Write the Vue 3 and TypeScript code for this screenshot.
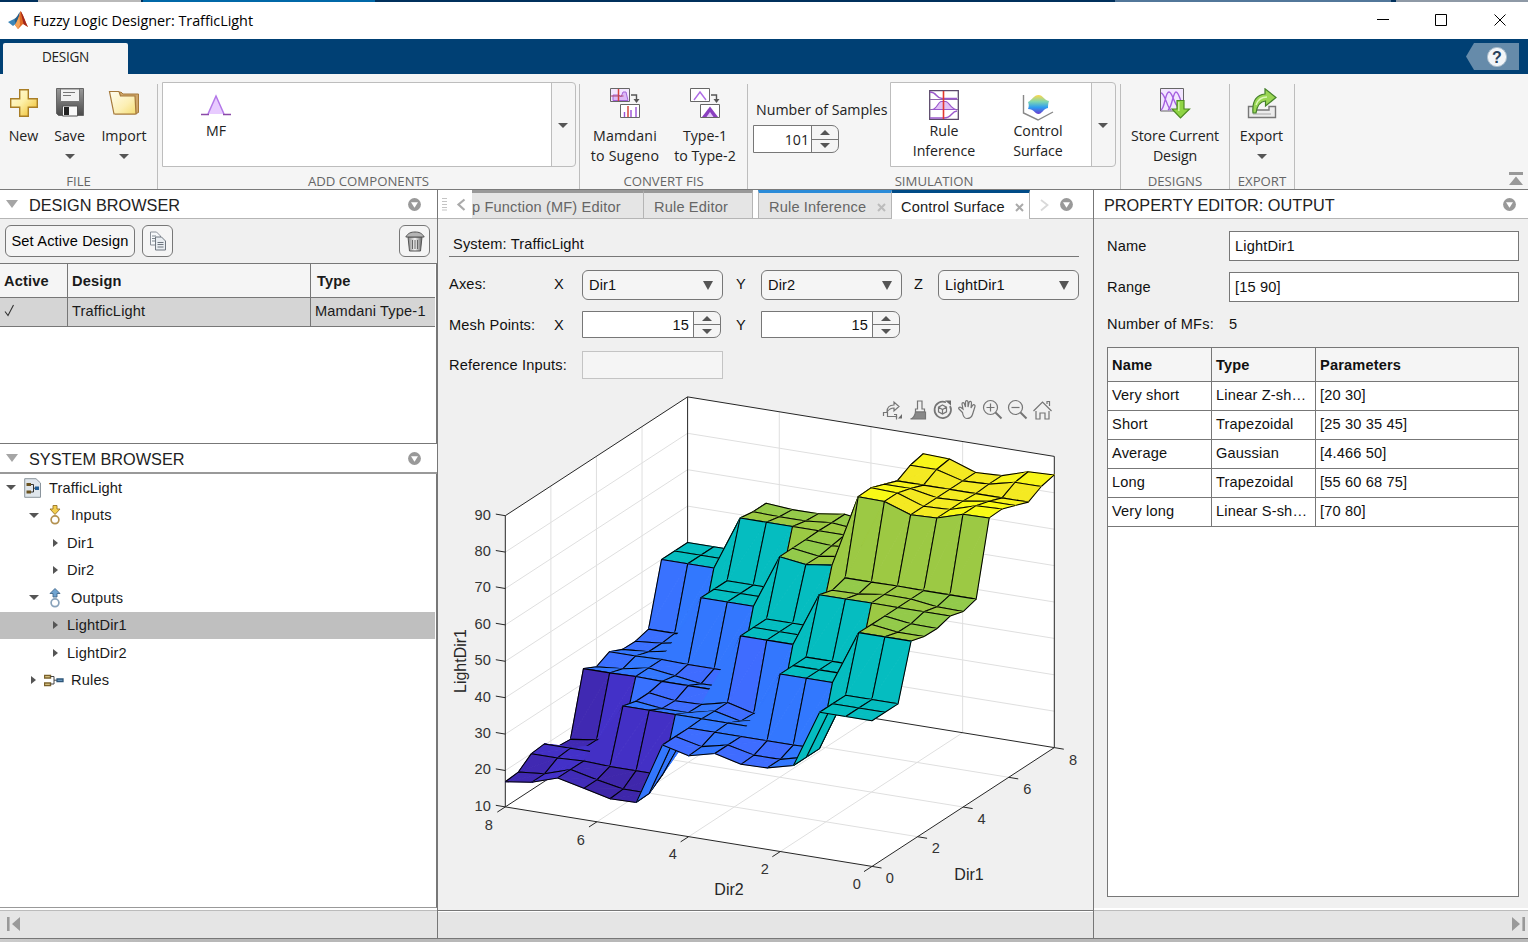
<script setup lang="ts">
interface Pt { x: number; y: number }
interface Face { fill: string; back: string; front: string; backEdges: string; frontEdges: string }

const N = 15

// Plateau height for each pair of input terms: rows follow Dir1, columns follow Dir2.
const level: number[][] = [
  [2, 1, 1, 0, 0],
  [3, 2, 1, 1, 0],
  [3, 3, 2, 1, 1],
  [4, 4, 3, 2, 1],
  [4, 4, 3, 3, 2],
]
const base = [16.9, 32.2, 50, 63.7, 84.9]
const ripple = [3.4, 2, 0, 1.2, -2.8]
const weak = [0, 0.1, 0.9, 1, 0.1, 0, 0.9, 0, 0.9, 0.05, 0, 0.5, 1, 0.3, 0]
const low = ['#3e26a8', '#3f6cff', '#05bdc0', '#92ca4b', '#f9fb15']
const high = ['#4331c8', '#3278fe', '#05bdc0', '#9dc943', '#f4e922']

const termAt = (i: number, j: number) => level[Math.floor(i / 3)][Math.floor(j / 3)]
const weakAt = (i: number, j: number) => Math.max(weak[i], weak[j])
const zAt = (i: number, j: number) => base[termAt(i, j)] + ripple[termAt(i, j)] * weakAt(i, j)

function project(d1: number, d2: number, z: number): Pt {
  return {
    x: 872 + (d1 / 8) * 182.3 - (d2 / 8) * 366.7,
    y: 866.4 - (d1 / 8) * 118.8 - (d2 / 8) * 59.5 - (z - 10) * 3.64,
  }
}

function mix(a: string, b: string, t: number): string {
  const ch = (s: string, k: number) => parseInt(s.slice(1 + k * 2, 3 + k * 2), 16)
  const v = [0, 1, 2].map((k) => Math.round(ch(a, k) + (ch(b, k) - ch(a, k)) * t))
  return `rgb(${v.join(',')})`
}

const str = (p: Pt) => `${p.x.toFixed(2)} ${p.y.toFixed(2)}`
const vertex = (i: number, j: number) => str(project((i * 8) / (N - 1), (j * 8) / (N - 1), zAt(i, j)))

const faces: Face[] = []
for (let i = N - 2; i >= 0; i--) {
  for (let j = N - 2; j >= 0; j--) {
    const a = vertex(i, j)
    const b = vertex(i, j + 1)
    const c = vertex(i + 1, j + 1)
    const d = vertex(i + 1, j)
    const t = termAt(i, j)
    faces.push({
      fill: mix(low[t], high[t], weakAt(i, j)),
      back: `M${b}L${c}L${d}Z`,
      front: `M${a}L${b}L${d}Z`,
      backEdges: `M${b}L${c}L${d}`,
      frontEdges: `M${b}L${a}L${d}`,
    })
  }
}

const seg = (p: Pt, q: Pt) => `M${str(p)}L${str(q)}`
let grid = ''
for (let z = 20; z <= 80; z += 10) {
  grid += seg(project(0, 8, z), project(8, 8, z)) + seg(project(8, 8, z), project(8, 0, z))
}
for (const v of [2, 4, 6]) {
  grid += seg(project(v, 8, 10), project(v, 8, 90)) + seg(project(v, 8, 10), project(v, 0, 10))
  grid += seg(project(8, v, 10), project(8, v, 90)) + seg(project(8, v, 10), project(0, v, 10))
}

const corner = (d1: number, d2: number, z: number) => str(project(d1, d2, z))
const walls = `M${corner(0, 8, 10)}L${corner(0, 8, 90)}L${corner(8, 8, 90)}L${corner(8, 0, 90)}L${corner(8, 0, 10)}L${corner(0, 0, 10)}Z`
let frame = walls
frame += `M${corner(0, 8, 10)}L${corner(8, 8, 10)}L${corner(8, 0, 10)}M${corner(8, 8, 10)}L${corner(8, 8, 90)}`

const zTicks = [10, 20, 30, 40, 50, 60, 70, 80, 90].map((z) => ({ z, p: project(0, 8, z) }))
const dTicks = [0, 2, 4, 6, 8]
for (const { p } of zTicks) frame += seg(p, { x: p.x - 9.5, y: p.y - 1.6 })
for (const v of dTicks) {
  const p = project(0, v, 10)
  frame += seg(p, { x: p.x - 8, y: p.y + 5.2 })
  const q = project(v, 0, 10)
  frame += seg(q, { x: q.x + 9.5, y: q.y + 1.6 })
}

const mfs = [
  ['Very short', 'Linear Z-sh…', '[20 30]'],
  ['Short', 'Trapezoidal', '[25 30 35 45]'],
  ['Average', 'Gaussian', '[4.466 50]'],
  ['Long', 'Trapezoidal', '[55 60 68 75]'],
  ['Very long', 'Linear S-sh…', '[70 80]'],
]

interface Node { label: string; cls: string; open: boolean; icon: string; sel?: boolean }
const tree: Node[] = [
  { label: 'TrafficLight', cls: 'l0', open: true, icon: 'doc' },
  { label: 'Inputs', cls: 'l1', open: true, icon: 'in' },
  { label: 'Dir1', cls: 'l2', open: false, icon: '' },
  { label: 'Dir2', cls: 'l2', open: false, icon: '' },
  { label: 'Outputs', cls: 'l1', open: true, icon: 'out' },
  { label: 'LightDir1', cls: 'l2', open: false, icon: '', sel: true },
  { label: 'LightDir2', cls: 'l2', open: false, icon: '' },
  { label: 'Rules', cls: 'l1', open: false, icon: 'rules' },
]
</script>

<template>
  <div class="win">
    <div class="behind"><i class="b1"></i><i class="b2"></i><i class="b3"></i><i class="b4"></i><i class="b5"></i></div>
    <header class="title">
      <svg class="logo" width="20" height="19" viewBox="0 0 20 19">
        <path d="M0 11 6 8 9 12 5 15Z" fill="#3c86b8" /><path d="M6 8C9 7 10 3 12 1L10 11 8 13Z" fill="#245f8c" />
        <path d="M12.500 0C15 3 17 10 20 16L15 13 10 18 7 14C9 12 11 5 12.500 0Z" fill="#e06a25" />
        <path d="M12.500 0C15 3 17 10 20 16L15.500 13Z" fill="#a3261a" /><path d="M11.500 5 12 14 10 18 7 14Z" fill="#f3a45a" />
      </svg>
      <span class="t">Fuzzy Logic Designer: TrafficLight</span>
      <svg class="ctl" width="140" height="20" viewBox="0 0 140 20" fill="none" stroke="#000" stroke-width="1">
        <path d="M7 9.500h12M65.500 4.500h11v11h-11ZM124.500 4.500l11 11M135.500 4.500l-11 11" />
      </svg>
    </header>
    <nav class="bar">
      <div class="dtab">DESIGN</div>
      <svg class="help" width="53" height="27" viewBox="0 0 53 27">
        <path d="M8 0H53V27H8L0 13.500Z" fill="#668baa" /><circle cx="31" cy="14" r="9.600" fill="#f2f5f8" stroke="#a9bccb" />
        <text x="31" y="19.500" text-anchor="middle" font-family="Liberation Sans" font-weight="700" font-size="16" fill="#27405a">?</text>
      </svg>
    </nav>

    <section class="ribbon">
      <div class="sec">
        <div class="body">
          <div class="btn w1">
            <svg width="30" height="32" viewBox="0 0 30 32"><defs><linearGradient id="gold" x1="0" y1="0" x2="1" y2="1"><stop offset="0" stop-color="#fffbe0" /><stop offset=".45" stop-color="#fdf0a8" /><stop offset="1" stop-color="#eeb71b" /></linearGradient></defs><path d="M10.700 1.700h8.600v9h9v8.600h-9v9h-8.600v-9h-9v-8.600h9Z" fill="url(#gold)" stroke="#a97e26" stroke-width="1.400" /></svg>
            <span>New</span>
          </div>
          <div class="btn w2">
            <svg width="30" height="32" viewBox="0 0 30 32"><defs><linearGradient id="disk" x1="0" y1="0" x2="0" y2="1"><stop offset="0" stop-color="#9a9a9a" /><stop offset="1" stop-color="#4a4a4a" /></linearGradient></defs><path d="M1.500 .5h27v27h-25l-2-2Z" fill="url(#disk)" stroke="#666" /><path d="M5.500 1h19v12.500h-19Z" fill="#f2f2f2" stroke="#777" /><path d="M8 4.500h12M8 7.500h8" stroke="#777" /><path d="M7.500 18h15v10h-15Z" fill="#fafafa" stroke="#555" /><path d="M9 19h5v8H9Z" fill="#222" /></svg>
            <span>Save</span><i class="dn"></i>
          </div>
          <div class="btn w3">
            <svg width="34" height="32" viewBox="0 0 34 32"><defs><linearGradient id="fold" x1="0" y1="0" x2="1" y2="1"><stop offset="0" stop-color="#fffdf0" /><stop offset=".6" stop-color="#fcefb4" /><stop offset="1" stop-color="#f4dc72" /></linearGradient></defs><path d="M6 7 14 4 16 6H31.500V24.500L28 26H8Z" fill="#cfa66a" stroke="#a5793a" /><path d="M2.500 3.500H12L13.500 8H28L29 26H7Z" fill="url(#fold)" stroke="#a5793a" stroke-width="1.200" /></svg>
            <span>Import</span><i class="dn"></i>
          </div>
        </div>
        <div class="cap">FILE</div>
      </div>

      <div class="sec">
        <div class="body">
          <div class="gal g1">
            <div class="gmain">
              <div class="item i1">
                <svg width="30" height="32" viewBox="0 0 30 32"><path d="M7 25 15 7 23 25Z" fill="#e8cbff" /><path d="M7 25 15 7 23 25" fill="none" stroke="#b377e8" stroke-width="1.500" /><path d="M0 25.500H8M22 25.500H30" stroke="#8b4aa8" stroke-width="1.300" /></svg>
                <span>MF</span>
              </div>
            </div>
            <div class="garr"><i class="dn"></i></div>
          </div>
        </div>
        <div class="cap">ADD COMPONENTS</div>
      </div>

      <div class="sec">
        <div class="body">
          <div class="btn w4">
            <svg width="32" height="32" viewBox="0 0 32 32" fill="none"><path d="M1.500 .5h19v13h-19Z" fill="#f3e8ff" stroke="#666" /><path d="M4 12.500V7h6l2 2 2-5h3l2 8.500Z" fill="#dcb8f7" stroke="#a463d8" /><path d="M9.500 1v12" stroke="#d6453a" stroke-width="1.500" /><path d="M1.500 8h13" stroke="#b04a6a" /><path d="M22 7h5.500v6" stroke="#555" stroke-width="1.400" /><path d="M24.500 11h6L27.500 15Z" fill="#555" /><path d="M11.500 16.500h19v13h-19Z" fill="#fff" stroke="#666" /><path d="M15.500 24v5M22 22v7M27 19v10" stroke="#9b51d6" stroke-width="1.400" /><path d="M19 18v11" stroke="#d6453a" stroke-width="1.500" /></svg>
            <span>Mamdani<br />to Sugeno</span>
          </div>
          <div class="btn w5">
            <svg width="32" height="32" viewBox="0 0 32 32" fill="none"><path d="M1.500 .5h19v13h-19Z" fill="#fff" stroke="#666" /><path d="M5 12 11 4 17 12" stroke="#ae6be6" stroke-width="1.400" /><path d="M22 7h5.500v6" stroke="#555" stroke-width="1.400" /><path d="M24.500 11h6L27.500 15Z" fill="#555" /><path d="M11.500 16.500h19v13h-19Z" fill="#fff" stroke="#666" /><path d="M13 29 21 18.500 29 29Z" fill="#8a3fc0" /><path d="M17.500 29 21 24 24.500 29Z" fill="#e4ccf8" /></svg>
            <span>Type-1<br />to Type-2</span>
          </div>
        </div>
        <div class="cap">CONVERT FIS</div>
      </div>

      <div class="sec">
        <div class="body">
          <div class="samples">
            <div class="slabel">Number of Samples</div>
            <div class="spin sp1"><div class="val">101</div><div class="steps"><b><i class="up"></i></b><b><i class="dn"></i></b></div></div>
          </div>
          <div class="gal g2">
            <div class="gmain">
              <div class="item i2">
                <svg width="32" height="32" viewBox="0 0 32 32" fill="none"><path d="M1.700 1.700h28.600v28.600h-28.600Z" fill="#fff" stroke="#5b4a6b" stroke-width="1.300" /><path d="M2 10.500h28M2 20.500h28" stroke="#8f68ab" stroke-width="1.200" /><path d="M4 20.500C9 20 10 13 13 12.500h5C21 13 23 20 28 20.500Z" fill="#e1c2f7" stroke="#9a58cc" stroke-width="1.200" /><path d="M2 3c7 0 6 6.500 12 6.500H29M2 29H16c8 0 7-6.500 13-7" stroke="#9a58cc" stroke-width="1.400" /><path d="M15.500 2v28" stroke="#e3382e" stroke-width="1.600" /></svg>
                <span>Rule<br />Inference</span>
              </div>
              <div class="item i3">
                <svg width="32" height="32" viewBox="0 0 32 32" fill="none"><defs><linearGradient id="surf" x1="0" y1="0" x2="0" y2="1"><stop offset="0" stop-color="#ffd84a" /><stop offset=".35" stop-color="#7ed6b0" /><stop offset=".65" stop-color="#2f9df0" /><stop offset="1" stop-color="#6a3bd0" /></linearGradient></defs><path d="M1.500 6V24L16 31 31 23" stroke="#888" stroke-width="1.400" /><path d="M6 13C10 11 12 6 16.500 6S22 11 27 12C26 15 26 17 26 19C21 20 20 25 16.500 25S12 20 6 20C7 18 7 15 6 13Z" fill="url(#surf)" /></svg>
                <span>Control<br />Surface</span>
              </div>
            </div>
            <div class="garr"><i class="dn"></i></div>
          </div>
        </div>
        <div class="cap">SIMULATION</div>
      </div>

      <div class="sec">
        <div class="body">
          <div class="btn w6">
            <svg width="32" height="32" viewBox="0 0 32 32" fill="none"><path d="M1.500 .5h23v22.500h-23Z" fill="#f2e6ff" stroke="#666" /><path d="M2 22C6 20 6 4 10 4S15 20 23 22M2 5C6 5 8 20 12 22M9 22C13 20 14 4 17 4S22 14 24 20" stroke="#a45fe0" stroke-width="1.400" /><path d="M18 12.500h7v8.500h5.500L21.500 30 13 21h5Z" fill="#8fd444" stroke="#4d8a22" stroke-width="1.200" /><path d="M19.800 14v9" stroke="#d2f5a6" stroke-width="1.500" /></svg>
            <span>Store Current<br />Design</span>
          </div>
        </div>
        <div class="cap">DESIGNS</div>
      </div>

      <div class="sec">
        <div class="body">
          <div class="btn w7">
            <svg width="32" height="32" viewBox="0 0 32 32" fill="none"><path d="M2.500 18.500H8V22H23V18.500H29.500V29.500H2.500Z" fill="#ececec" stroke="#777" stroke-width="1.400" /><path d="M7 26H25" stroke="#c9c9c9" stroke-width="2" /><path d="M7 25C6 14 10 7 19 6V.800L30 9.500 19.500 18V13C14 13.500 11 18 10 25Z" fill="#9ad654" stroke="#44802a" stroke-width="1.200" /><path d="M10 17c2-6 6-8 11-8" stroke="#dcf8b8" stroke-width="1.300" /></svg>
            <span>Export</span><i class="dn"></i>
          </div>
        </div>
        <div class="cap">EXPORT</div>
      </div>
      <svg class="collapse" width="14" height="14" viewBox="0 0 14 14"><path d="M0 0H14V3H0ZM7 4.500 14 13H0Z" fill="#999" /></svg>
    </section>

    <main class="cols">
      <aside class="left">
        <div class="phead"><i class="tri"></i><span class="ptitle">DESIGN BROWSER</span>
          <svg class="circ" width="13" height="13" viewBox="0 0 13 13"><circle cx="6.500" cy="6.500" r="6.400" fill="#999" /><path d="M3 4.300h7L6.500 9.800Z" fill="#fff" /></svg></div>
        <div class="tools">
          <button class="tb set">Set Active Design</button>
          <button class="tb sq"><svg width="18" height="20" viewBox="0 0 18 20"><path d="M1.500 1h6l4 4v9h-10Z" fill="#f6f8fa" stroke="#8a9099" /><path d="M3 5h4M3 7.500h3M3 10h3" stroke="#7f8890" /><path d="M6.500 6h6l4 4v9h-10Z" fill="#e9edf1" stroke="#6f7780" /><path d="M8.500 11.500h6M8.500 13.500h6M8.500 16h6" stroke="#6f7780" /></svg></button>
          <button class="tb sq last"><svg width="20" height="21" viewBox="0 0 20 21"><defs><linearGradient id="bin"><stop offset="0" stop-color="#888" /><stop offset=".5" stop-color="#f5f5f5" /><stop offset="1" stop-color="#666" /></linearGradient></defs><path d="M3 6H17L15.500 20H4.500Z" fill="url(#bin)" stroke="#555" /><path d="M7.500 9v9M10 9v9M12.500 9v9" stroke="#666" /><path d="M.8 6C3 2 6 1 10 1S17 2 19.200 6Z" fill="#b5b5b5" stroke="#555" /></svg></button>
        </div>
        <div class="dtable">
          <div class="dr dh"><div>Active</div><div>Design</div><div>Type</div></div>
          <div class="dr dd"><div><svg width="11" height="13" viewBox="0 0 11 13"><path d="M1 7.500 4 11.500 9.500 1" fill="none" stroke="#333" stroke-width="1.100" /></svg></div><div>TrafficLight</div><div>Mamdani Type-1</div></div>
        </div>
        <div class="phead ph2"><i class="tri"></i><span class="ptitle">SYSTEM BROWSER</span>
          <svg class="circ" width="13" height="13" viewBox="0 0 13 13"><circle cx="6.500" cy="6.500" r="6.400" fill="#999" /><path d="M3 4.300h7L6.500 9.800Z" fill="#fff" /></svg></div>
        <div class="tree">
          <div v-for="n in tree" :key="n.label" class="node" :class="[n.cls, { sel: n.sel }]">
            <i class="tw" :class="n.open ? 'dn' : 'rt'"></i>
            <svg v-if="n.icon === 'doc'" class="ic doc" width="18" height="20" viewBox="0 0 18 20"><path d="M.7.700H12L16.500 5V19.300H.7Z" fill="#dfe6ec" stroke="#8a949c" /><path d="M2.500 5h4.500v3h-4.500ZM2.500 12.500h4.500v3h-4.500Z" fill="#6b5320" /><path d="M7 6.500h2.500v7.500H7M9.500 10.200h2" stroke="#333" fill="none" /><path d="M11 8.500h4v3.500h-4Z" fill="#1f5c94" /></svg>
            <svg v-if="n.icon === 'in'" class="ic io" width="12" height="20" viewBox="0 0 12 20"><path d="M4 .5h4V4h3L6 9.500 1 4h3Z" fill="#f3ce4f" stroke="#9a7427" stroke-width=".9" /><circle cx="6" cy="14.800" r="3.900" fill="#fff" stroke="#b39150" stroke-width="1.700" /></svg>
            <svg v-if="n.icon === 'out'" class="ic io" width="12" height="20" viewBox="0 0 12 20"><path d="M4 9V5.500H1L6 .5l5 5H8V9Z" fill="#6fa3d0" stroke="#41668a" stroke-width=".9" /><circle cx="6" cy="14.800" r="3.900" fill="#fff" stroke="#8aa3bb" stroke-width="1.700" /></svg>
            <svg v-if="n.icon === 'rules'" class="ic ru" width="20" height="13" viewBox="0 0 20 13"><path d="M.5 1.500h6v2.500h-6ZM.5 9h6v2.500h-6Z" fill="#f0dc9a" stroke="#7a612b" stroke-width="1.400" /><path d="M6.500 2.500h3.500v7.500H6.500M10 6.200h3" stroke="#444" fill="none" /><path d="M13 5h6v2.500h-6Z" fill="#79aad2" stroke="#2d5578" stroke-width="1.300" /></svg>
            <span>{{ n.label }}</span>
          </div>
        </div>
        <div class="foot"><svg width="14" height="14" viewBox="0 0 14 14"><path d="M0 0h2.600v14H0ZM13 0V14L5 7Z" fill="#999" /></svg></div>
      </aside>

      <section class="mid">
        <div class="tabs">
          <div class="pre"><svg width="30" height="16" viewBox="0 0 30 16"><path d="M0 1.500h5M0 4.500h5M0 7.500h5M0 10.500h5M0 13h5" stroke="#c4c4c4" /><path d="M22.500 2.500 16.500 7.500l6 5.500" fill="none" stroke="#aaa" stroke-width="2.200" /></svg></div>
          <div class="tab ta"><span>p Function (MF) Editor</span></div>
          <div class="tab tbb"><span>Rule Editor</span></div>
          <div class="tab tc"><span>Rule Inference</span><svg width="9" height="9" viewBox="0 0 9 9"><path d="M1 1l7 7M8 1l-7 7" stroke="#bbb" stroke-width="2" /></svg></div>
          <div class="tab td"><span>Control Surface</span><svg width="9" height="9" viewBox="0 0 9 9"><path d="M1 1l7 7M8 1l-7 7" stroke="#aaa" stroke-width="2" /></svg></div>
          <div class="post"><svg width="36" height="14" viewBox="0 0 36 14"><path d="M1 2 7.500 7 1 12.500" fill="none" stroke="#d9d9d9" stroke-width="1.800" /><circle cx="26.500" cy="6.500" r="6.400" fill="#999" /><path d="M23 4.300h7l-3.500 5.500Z" fill="#fff" /></svg></div>
        </div>
        <div class="form">
          <div class="sys">System: TrafficLight</div>
          <div class="frow">
            <span>Axes:</span><span>X</span><div class="sel1">Dir1<i class="dd2"></i></div><span class="c">Y</span><div class="sel1">Dir2<i class="dd2"></i></div><span class="c z">Z</span><div class="sel1">LightDir1<i class="dd2"></i></div>
          </div>
          <div class="frow r2">
            <span>Mesh Points:</span><span>X</span>
            <div class="spin"><div class="val">15</div><div class="steps"><b><i class="up"></i></b><b><i class="dn"></i></b></div></div>
            <span class="c">Y</span>
            <div class="spin"><div class="val">15</div><div class="steps"><b><i class="up"></i></b><b><i class="dn"></i></b></div></div>
          </div>
          <div class="frow r3"><span class="wide">Reference Inputs:</span><div class="ref"></div></div>
        </div>
        <svg class="chart" width="655" height="525" viewBox="438 385 655 525">
          <path :d="walls" fill="#fff" />
          <path :d="grid" fill="none" stroke="#dfdfdf" stroke-width="1" />
          <path :d="frame" fill="none" stroke="#262626" stroke-width="1" />
          <g stroke-linejoin="round">
            <template v-for="(f, k) in faces" :key="k">
              <path :d="f.back" :fill="f.fill" :stroke="f.fill" stroke-width="1" />
              <path :d="f.backEdges" fill="none" stroke="#000" stroke-width="1.050" />
              <path :d="f.front" :fill="f.fill" :stroke="f.fill" stroke-width=".7" />
              <path :d="f.frontEdges" fill="none" stroke="#000" stroke-width="1.050" />
            </template>
          </g>
          <g class="tick">
            <text v-for="t in zTicks" :key="'z' + t.z" x="491" :y="t.p.y + 3.900" text-anchor="end">{{ t.z }}</text>
            <text v-for="v in dTicks" :key="'a' + v" :x="857 - v * 46" :y="889 - v * 7.400" text-anchor="middle">{{ v }}</text>
            <text v-for="v in dTicks" :key="'b' + v" :x="890 + v * 22.900" :y="883 - v * 14.800" text-anchor="middle">{{ v }}</text>
          </g>
          <g class="axis">
            <text x="729" y="894.500" text-anchor="middle">Dir2</text>
            <text x="969" y="879.500" text-anchor="middle">Dir1</text>
            <text transform="translate(466 661) rotate(-90)" text-anchor="middle">LightDir1</text>
          </g>
          <g fill="none" stroke="#757575" stroke-width="1.200">
            <path d="M883.500 416v-3.500h4v4h9v3M887 412c0-5 3-7 7-7v-3l5 4.500-5 4.500v-3c-3 0-5 1-7 4" />
            <path d="M894 414.500h2.500v3.500" /><path d="M902 414v4.500h-4Z" fill="#6b6b6b" stroke="none" />
            <path d="M917.500 401h4.500v8h2.500v3h-9v-3h2Z" /><path d="M915.500 412h10v7h-15c3-1 4.500-4 5-7Z" fill="#888" />
            <path d="M946 402.300A8.200 8.200 0 1 0 950 406" stroke-width="1.700" /><path d="M945 400.500h6v5Z" fill="#6b6b6b" stroke="none" /><path d="M942.500 405l4 2.200v4.600l-4 2.200-4-2.200v-4.600ZM938.500 407.200l4 2.300 4-2.300M942.500 409.500v4.500" />
            <path d="M962.500 412.500l-3.500-3.500c-1-1 .5-2.500 2-1.500l2 1.500-1-5c0-1.500 2-2 2.500 0l1 3v-5c0-1.800 2.400-1.800 2.500 0v5l1-4.500c.5-1.800 2.500-1.300 2.500.5l-.5 5 1.500-2.500c1-1.500 3-.5 2.500 1l-2.500 8c-1 3-3 4-5.500 4s-4-2.500-4.500-6Z" />
            <circle cx="990.500" cy="407.500" r="7" /><path d="M986.500 407.500h8M990.500 403.500v8" /><path d="M995.500 412.500l6 6" stroke-width="2" />
            <circle cx="1015.500" cy="407.500" r="7" /><path d="M1011.500 407.500h8" /><path d="M1020.500 412.500l6 6" stroke-width="2" />
            <path d="M1033.500 411 1042.500 402l9 9M1036 411v8h4v-6h5v6h4v-8M1047 404v-2.500h2.500V406" />
          </g>
        </svg>
        <div class="foot mfoot"></div>
      </section>

      <aside class="right">
        <div class="phead rh"><span class="ptitle">PROPERTY EDITOR: OUTPUT</span>
          <svg class="circ" width="13" height="13" viewBox="0 0 13 13"><circle cx="6.500" cy="6.500" r="6.400" fill="#999" /><path d="M3 4.300h7L6.500 9.800Z" fill="#fff" /></svg></div>
        <div class="props">
          <div class="pr"><span>Name</span><div class="inp">LightDir1</div></div>
          <div class="pr p2"><span>Range</span><div class="inp">[15 90]</div></div>
          <div class="pr p3"><span>Number of MFs:</span><em>5</em></div>
          <div class="mft">
            <div class="mr mh"><div>Name</div><div>Type</div><div>Parameters</div></div>
            <div v-for="m in mfs" :key="m[0]" class="mr"><div v-for="c in m" :key="c">{{ c }}</div></div>
          </div>
        </div>
        <div class="foot rfoot"><svg width="14" height="14" viewBox="0 0 14 14"><path d="M0 0V14L8 7ZM10.400 0H13v14h-2.600Z" fill="#999" /></svg></div>
      </aside>
    </main>
    <div class="under"></div>
  </div>
</template>

<style>
html, body { margin: 0; overflow: hidden; }
</style>

<style scoped>
.win { width: 1528px; height: 942px; display: flex; flex-direction: column; background: #f0f0f0; font-family: "Liberation Sans", Arial, sans-serif; font-size: 14.6px; letter-spacing: 0.16px; color: #1a1a1a; overflow: hidden; }
.win * { box-sizing: border-box; }
.behind { height: 2px; display: flex; background: #00305c; flex: none; }
.b1 { width: 38px; } .b2 { width: 103px; background: #b9b9b9; } .b3 { width: 232px; background: #0068a8; margin-left: 2px; }
.b4 { width: 276px; background: #52779a; margin-left: 740px; } .b5 { flex: 1; background: #8e99a6; margin-left: 5px; }
.title { height: 37px; flex: none; background: #fff; display: flex; align-items: center; padding-left: 8px; font-family: "Open Sans", "Noto Sans", sans-serif; font-size: 14.4px; color: #000; }
.logo { margin-top: -1px; }
.t { margin-left: 5px; letter-spacing: -0.03px; white-space: nowrap; }
.ctl { margin-left: auto; margin-right: 18px; margin-top: -1px; }
.bar { height: 35px; flex: none; background: #004074; display: flex; align-items: flex-start; justify-content: space-between; padding: 4px 9px 0 3px; font-family: "Open Sans", "Noto Sans", sans-serif; }
.dtab { width: 125px; height: 31px; background: #f5f5f5; border-radius: 2px 2px 0 0; text-align: center; line-height: 28px; font-size: 13.6px; letter-spacing: -0.3px; color: #222; }
.ribbon { height: 116px; flex: none; background: #f5f5f5; border-bottom: 1px solid #7a7a7a; display: grid; grid-template-columns: 158px 422px 168px 373px 109px 65px 1fr; font-family: "Open Sans", "Noto Sans", sans-serif; font-size: 14.2px; letter-spacing: 0; color: #222; }
.sec { position: relative; display: flex; flex-direction: column; }
.sec::after { content: ""; position: absolute; right: 0; top: 10px; bottom: 0; width: 1px; background: #bdbdbd; }
.body { height: 99px; display: flex; }
.cap { text-align: center; line-height: 16px; font-size: 13.2px; letter-spacing: 0; color: #666; padding-right: 1px; }
.btn { display: flex; flex-direction: column; align-items: center; padding-top: 14px; text-align: center; white-space: nowrap; line-height: 20px; }
.btn svg { margin-bottom: 6px; flex: none; }
.dn, .up, .rt { display: block; width: 0; height: 0; border: 5px solid transparent; border-bottom: 0; border-top-color: #555; }
.up { border: 5px solid transparent; border-top: 0; border-bottom-color: #555; }
.btn .dn { margin-top: 8px; }
.w1 { width: 43px; margin-left: 2px; } .w2 { width: 47px; margin-left: 1px; } .w3 { width: 62px; }
.w4 { width: 80px; margin-left: 5px; letter-spacing: 0.2px; } .w5 { width: 80px; } .w6 { width: 108px; letter-spacing: -0.15px; } .w7 { width: 63px; }
.gal { height: 85px; margin-top: 8px; border: 1px solid #bdbdbd; border-radius: 0 4px 4px 0; display: flex; }
.g1 { width: 414px; margin-left: 4px; } .g2 { width: 226px; margin-left: 3px; }
.gmain { flex: 1; background: #fff; display: flex; }
.garr { width: 24px; border-left: 1px solid #bdbdbd; display: flex; align-items: center; justify-content: center; padding: 2px 1px 0 0; }
.item { display: flex; flex-direction: column; align-items: center; text-align: center; line-height: 20px; padding-top: 6px; }
.item svg { flex: none; }
.i1 { width: 106px; } .i2 { width: 94px; margin-left: 6px; } .i3 { width: 94px; }
.samples { width: 139px; padding: 26px 0 0 5px; }
.slabel { line-height: 20px; margin-left: 3px; white-space: nowrap; }
.spin { display: flex; border: 1px solid #777; border-radius: 0 7px 7px 0; background: #f5f5f5; overflow: hidden; }
.sp1 { width: 86px; height: 28px; margin-top: 5px; }
.val { flex: 1; background: #fff; border-right: 1px solid #777; text-align: right; line-height: 28px; padding-right: 2px; }
.steps { width: 26px; display: flex; flex-direction: column; }
.steps b { flex: 1; display: flex; align-items: center; justify-content: center; }
.steps b + b { border-top: 1px solid #777; }
.collapse { justify-self: end; align-self: end; margin: 0 5px 3px 0; }
.cols { height: 749px; flex: none; display: grid; grid-template-columns: 438px 656px 434px; }
.left { border-right: 1px solid #777; display: flex; flex-direction: column; background: #fff; }
.phead { height: 29px; flex: none; background: #fff; border-bottom: 1px solid #b5b5b5; display: flex; align-items: center; padding: 0 16px 0 6px; }
.tri { width: 0; height: 0; border: 6px solid transparent; border-top: 8px solid #a5a5a5; border-bottom: 0; }
.ptitle { font-size: 16.3px; letter-spacing: 0; margin-left: 11px; color: #222; line-height: 20px; margin-top: 2px; white-space: nowrap; }
.circ { margin-left: auto; }
.tools { height: 44px; flex: none; background: #f0f0f0; display: flex; align-items: center; padding: 0 7px 0 5px; gap: 7px; }
.tb { height: 32px; margin: 0; padding: 0; border: 1px solid #777; border-radius: 6px; background: #f5f5f5; font: inherit; letter-spacing: inherit; color: #000; display: flex; align-items: center; justify-content: center; white-space: nowrap; }
.set { width: 130px; } .sq { width: 31px; } .last { margin-left: auto; }
.dtable { height: 181px; flex: none; border-top: 1px solid #777; border-bottom: 1px solid #777; border-right: 1px solid #777; }
.dr { display: grid; grid-template-columns: 67px 243px 125px; width: 435px; border-bottom: 1px solid #777; }
.dr > div { padding-left: 4px; white-space: nowrap; overflow: hidden; }
.dr > div + div { border-left: 1px solid #777; }
.dh { height: 34px; line-height: 34px; background: #f5f5f5; font-weight: 700; }
.dh > div:last-child { padding-left: 6px; }
.dd { height: 29px; line-height: 27px; background: #d5d5d5; }
.dd svg { vertical-align: -1px; }
.ph2 { height: 30px; border-bottom: 2px solid #999; }
.tree { flex: 1; border-right: 1px solid #777; border-bottom: 1px solid #999; }
.node { height: 27.5px; display: flex; align-items: center; width: 435px; white-space: nowrap; }
.sel { background: #bfbfbf; }
.tw { flex: none; }
.rt { border: 4.500px solid transparent; border-right: 0; border-left: 5.500px solid #555; }
.l0 { padding-left: 6px; } .l1 { padding-left: 29px; } .l2 { padding-left: 53px; }
.l0 .doc { margin-left: 8px; margin-right: 7px; }
.l1 .io { margin-left: 10px; margin-right: 10px; }
.l1 .rt { margin-left: 2px; }
.l1 .ru { margin-left: 8px; margin-right: 7px; }
.l2 span { margin-left: 9px; }
.foot { height: 31px; flex: none; border-top: 2px solid #fff; background: #e5e5e5; box-shadow: inset 0 1px 0 #bbb; border-bottom: 1px solid #777; padding: 7px 0 0 7px; }
.mid { border-right: 1px solid #777; display: flex; flex-direction: column; }
.tabs { height: 29px; flex: none; background: #fff; border-bottom: 1px solid #b5b5b5; display: flex; }
.pre { width: 34px; padding: 7px 0 0 4px; }
.tab { height: 28px; background: #e5e5e5; border-top: 3px solid #999; border-right: 1px solid #b5b5b5; color: #666; display: flex; align-items: center; white-space: nowrap; line-height: 20px; padding-top: 3px; }
.tab svg { margin-left: auto; margin-right: 5px; }
.ta { width: 172px; overflow: hidden; } .tbb { width: 109px; padding-left: 10px; }
.tc { width: 134px; margin-left: 5px; border-top-color: #2a8bd8; border-left: 1px solid #b5b5b5; padding-left: 10px; }
.td { width: 138px; height: 29px; background: #fff; border-top-color: #004b87; color: #1a1a1a; padding-left: 9px; padding-bottom: 1px; }
.post { padding: 8px 0 0 10px; }
.form { height: 166px; flex: none; padding: 14px 14px 0 11px; color: #111; }
.sys { height: 24px; line-height: 23px; padding-left: 4px; border-bottom: 1px solid #777; }
.frow { display: grid; grid-template-columns: 105px 28px 141px 38px 141px 36px 141px; height: 28px; margin-top: 13px; line-height: 28px; align-items: stretch; white-space: nowrap; }
.r3 { margin-top: 12px; }
.c { padding-left: 13px; }
.z { padding-left: 12px; }
.sel1 { border: 1px solid #777; border-radius: 6px; background: #f5f5f5; padding: 0 9px 0 6px; line-height: 28px; display: flex; align-items: center; justify-content: space-between; }
.dd2 { width: 0; height: 0; border: 5px solid transparent; border-top: 9px solid #555; border-bottom: 0; }
.frow .spin { width: 139px; height: 27px; }
.frow .val { line-height: 26px; padding-right: 4px; }
.wide { grid-column: span 2; }
.ref { border: 1px solid #c4c4c4; background: #f5f5f5; }
.chart { display: block; flex: none; }
.tick text { font-family: "Liberation Sans", Arial, sans-serif; font-size: 14.6px; fill: #333; }
.axis text { font-family: "Liberation Sans", Arial, sans-serif; font-size: 16px; letter-spacing: 0; fill: #262626; }
.mfoot { height: 29px; border-top: 1px solid #777; box-shadow: inset 0 1px 0 #fff; }
.right { display: flex; flex-direction: column; }
.right .phead { padding: 0 12px 0 10px; }
.right .ptitle { margin-left: 0; }
.props { flex: 1; padding: 12px 9px 0 13px; color: #111; display: flex; flex-direction: column; }
.pr { display: grid; grid-template-columns: 122px 290px; height: 29px; line-height: 30px; }
.p2 { margin-top: 12px; } .p3 { height: 20px; line-height: 20px; margin-top: 13px; }
.pr em { font-style: normal; }
.inp { border: 1px solid #777; background: #fff; padding-left: 5px; line-height: 28px; }
.mft { height: 550px; margin-top: 13px; border: 1px solid #777; background: #fff; }
.mr { height: 29px; line-height: 27px; display: grid; grid-template-columns: 103px 104px 1fr; border-bottom: 1px solid #777; }
.mr > div { padding-left: 4px; white-space: nowrap; overflow: hidden; }
.mr > div + div { border-left: 1px solid #777; }
.mh { height: 34px; line-height: 34px; background: #f5f5f5; font-weight: 700; }
.rfoot { display: flex; justify-content: flex-end; padding: 7px 2px 0 0; }
.under { flex: 1; background: linear-gradient(90deg, #ccc, #b8b8b8 10%, #b8b8b8); }
</style>
